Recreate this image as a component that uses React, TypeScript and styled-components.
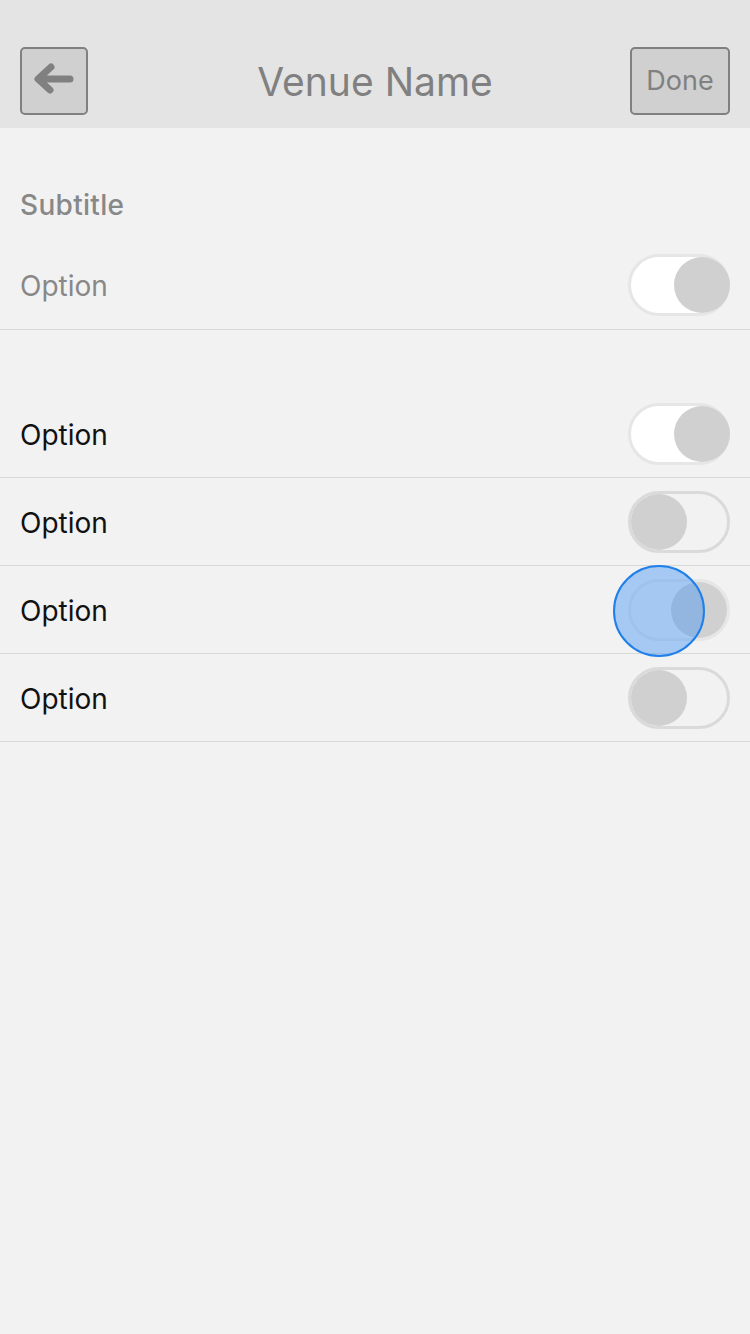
import React from "react";
import styled, { createGlobalStyle } from "styled-components";

const Global = createGlobalStyle`
  html, body { margin: 0; padding: 0; background: #f2f2f2; }
  body { font-family: Inter, "Open Sans", sans-serif; }
  #root { min-height: 1334px; }
`;

const Page = styled.div`
  width: 750px;
  min-height: 1334px;
  background: #f2f2f2;
  display: flex;
  flex-direction: column;
`;

const Header = styled.header`
  height: 128px;
  box-sizing: border-box;
  background: #e4e4e4;
  display: grid;
  grid-template-columns: 1fr auto 1fr;
  align-items: center;
  padding: 34px 20px 0;
`;

const IconButton = styled.button`
  justify-self: start;
  width: 68px;
  height: 68px;
  box-sizing: border-box;
  border: 2px solid #808080;
  border-radius: 5px;
  background: #d0d0d0;
  display: flex;
  align-items: center;
  justify-content: center;
  padding: 0;
`;

const TextButton = styled.button`
  justify-self: end;
  width: 100px;
  height: 68px;
  box-sizing: border-box;
  border: 2px solid #808080;
  border-radius: 5px;
  background: #d0d0d0;
  color: #808080;
  font-family: Inter, sans-serif;
  font-size: 27px;
  padding: 0 0 2px;
`;

const Title = styled.h1`
  margin: 0;
  font-weight: 400;
  font-size: 39px;
  color: #808080;
`;

const Section = styled.section<{ $top: number }>`
  margin-top: ${(p) => p.$top}px;
  display: flex;
  flex-direction: column;
`;

const Subtitle = styled.div`
  padding: 0 20px;
  height: 38px;
  display: flex;
  align-items: center;
  font-size: 28px;
  font-weight: 500;
  letter-spacing: 0.3px;
  color: #888888;
`;

const Row = styled.div<{ $tall?: boolean }>`
  height: ${(p) => (p.$tall ? 106 : 88)}px;
  box-sizing: border-box;
  border-bottom: 1px solid #d8d8d8;
  display: flex;
  align-items: center;
  justify-content: space-between;
  padding: ${(p) => (p.$tall ? "18px 20px 0" : "2px 20px 0")};
  position: relative;
`;

const Label = styled.span<{ $muted?: boolean }>`
  font-size: 28px;
  color: ${(p) => (p.$muted ? "#888888" : "#111111")};
`;

const Track = styled.div<{ $on: boolean; $pressed?: boolean }>`
  width: 102px;
  height: 62px;
  box-sizing: border-box;
  border-radius: 31px;
  border: 3px solid ${(p) => (p.$on ? "#e6e6e6" : "#dadada")};
  background: ${(p) => (p.$pressed ? "#f0f0f0" : p.$on ? "#ffffff" : "transparent")};
  display: flex;
  justify-content: ${(p) => (p.$on ? "flex-end" : "flex-start")};
  align-items: center;
  margin-top: -2px;
`;

const Knob = styled.div<{ $edge?: boolean }>`
  width: 56px;
  height: 56px;
  flex: none;
  border-radius: 50%;
  background: #d0d0d0;
  margin-right: ${(p) => (p.$edge ? -3 : 0)}px;
`;

const Touch = styled.div`
  position: absolute;
  left: 613px;
  top: -1px;
  width: 92px;
  height: 92px;
  box-sizing: border-box;
  border-radius: 50%;
  border: 2px solid #1f80ea;
  background: rgba(70, 150, 245, 0.45);
`;

const Toggle = ({ on, pressed }: { on: boolean; pressed?: boolean }) => (
  <Track $on={on} $pressed={pressed}>
    <Knob $edge={on && !pressed} />
  </Track>
);

const BackArrow = () => (
  <svg width="46" height="40" viewBox="0 0 46 40">
    <path
      d="M20 6 L7 18 L19 29 M8 18 L39 18"
      fill="none"
      stroke="#808080"
      strokeWidth="7"
      strokeLinecap="round"
      strokeLinejoin="round"
    />
  </svg>
);

export default function App() {
  return (
    <Page>
      <Global />
      <Header>
        <IconButton aria-label="Back">
          <BackArrow />
        </IconButton>
        <Title>Venue Name</Title>
        <TextButton>Done</TextButton>
      </Header>
      <Section $top={58}>
        <Subtitle>Subtitle</Subtitle>
        <Row $tall>
          <Label $muted>Option</Label>
          <Toggle on />
        </Row>
      </Section>
      <Section $top={60}>
        <Row>
          <Label>Option</Label>
          <Toggle on />
        </Row>
        <Row>
          <Label>Option</Label>
          <Toggle on={false} />
        </Row>
        <Row>
          <Label>Option</Label>
          <Toggle on pressed />
          <Touch />
        </Row>
        <Row>
          <Label>Option</Label>
          <Toggle on={false} />
        </Row>
      </Section>
    </Page>
  );
}
